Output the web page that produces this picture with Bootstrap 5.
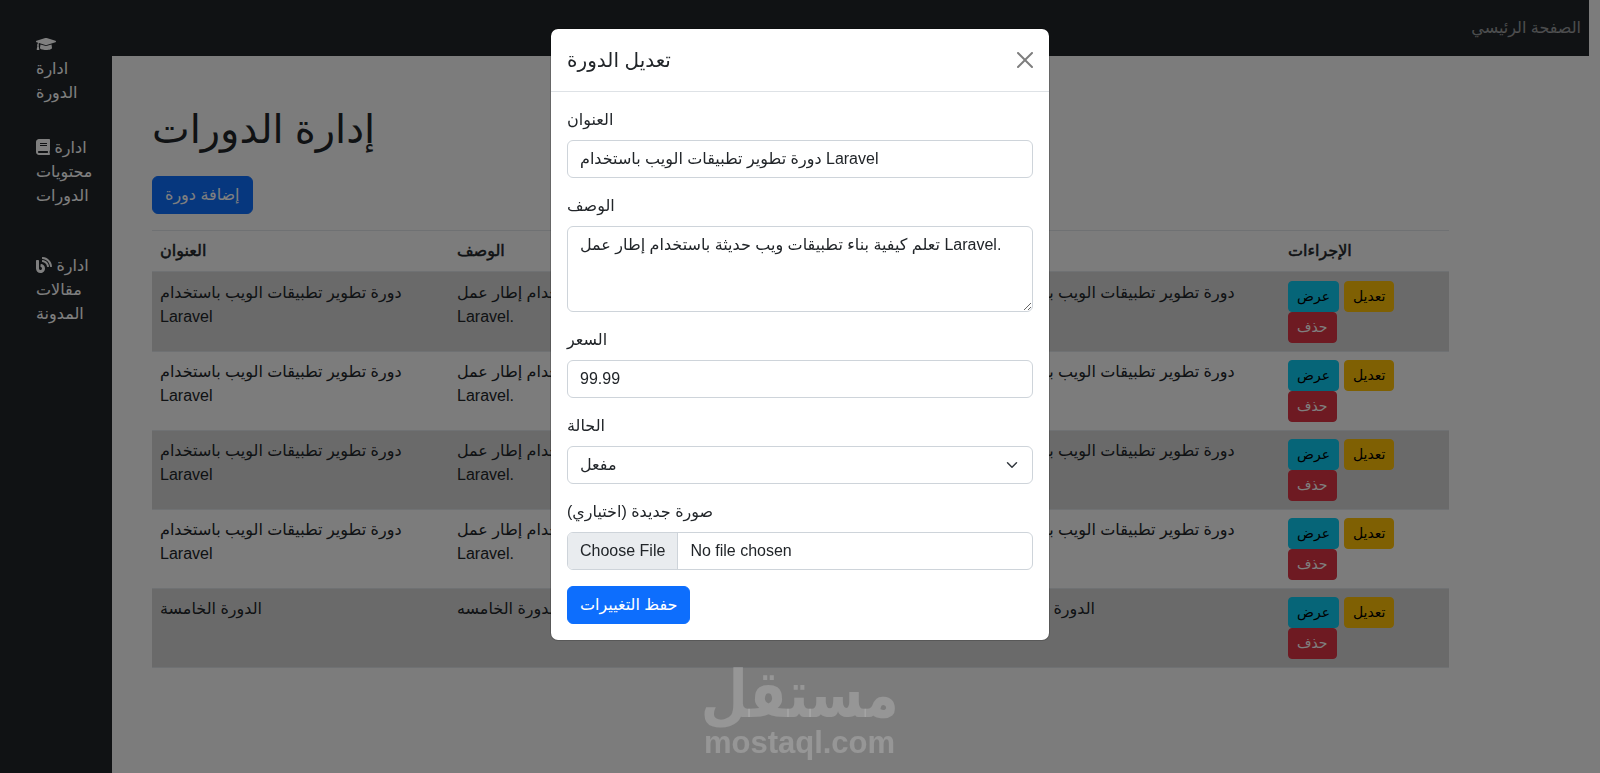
<!DOCTYPE html>
<html lang="ar">
<head>
    <meta charset="UTF-8">
    <title>إدارة الدورات</title>
    <link rel="stylesheet" href="https://cdn.jsdelivr.net/npm/bootstrap@5.3.2/dist/css/bootstrap.min.css">
    <style>
        body { font-family: "Liberation Sans", "DejaVu Sans", sans-serif; padding-right: 11px; overflow: hidden; background: #f8f8f8; }
        .side-bar { width: 112px; flex: none; padding: 33px 0 0 36px; }
        .side-bar a { display: block; width: 56px; color: #fff; text-decoration: none; }
        .side-bar a.first-link { margin-bottom: 31px; }
        .side-bar a.second-link { margin-bottom: 46px; }
        .side-bar svg { fill: currentColor; height: 16px; vertical-align: -2px; }
        .page-body { padding: 49px 140px 0 40px; }
        .page-body h1 { margin-bottom: 23px; }
        .courses-table { table-layout: fixed; width: 1297px; --bs-table-striped-bg: rgba(0, 0, 0, .14); --bs-table-bg: transparent; }
        .courses-table th { font-weight: 400; -webkit-text-stroke: .5px currentColor; }
        .courses-table th:nth-child(1) { width: 297px; }
        .courses-table th:nth-child(2) { width: 400px; }
        .courses-table th:nth-child(3) { width: 69px; }
        .courses-table th:nth-child(4) { width: 67px; }
        .courses-table th:nth-child(5) { width: 295px; }
        .courses-table th:nth-child(6) { width: 169px; }
        .courses-table tbody tr:first-child td { padding-top: 9px; }
        .courses-table .btn-info { margin-right: .5px; }
        .form-control, .form-select { border-color: #ced4da; }
        .form-control::file-selector-button { background-color: #e9ecef; }
        .water-mark { z-index: 1060; left: 703px; width: 193px; top: 661px; color: rgba(255, 255, 255, .2); pointer-events: none; }
        .water-mark .logo-ar { font: 700 66px/67px "DejaVu Sans", sans-serif; transform: scaleX(.82); white-space: nowrap; }
        .water-mark .logo-en { font: 700 31px/30px "Liberation Sans", sans-serif; white-space: nowrap; }
    </style>
</head>
<body class="modal-open">

<div class="d-flex min-vh-100">
    <div class="side-bar bg-dark">
        <a href="#" class="first-link">
            <svg viewBox="0 0 640 512"><path d="M622.34 153.2L343.4 67.5c-15.2-4.67-31.6-4.67-46.79 0L17.66 153.2c-23.54 7.23-23.54 38.36 0 45.59l48.63 14.94c-10.67 13.19-17.23 29.28-17.88 46.9C38.78 266.15 32 276.11 32 288c0 10.78 5.68 19.85 13.86 25.65L20.33 428.53C18.11 438.52 25.71 448 35.94 448h56.11c10.24 0 17.84-9.48 15.62-19.47L82.14 313.65C90.32 307.85 96 298.78 96 288c0-11.57-6.47-21.25-15.66-26.87.76-15.02 8.44-28.3 20.69-36.72L296.6 284.5c9.06 2.78 26.44 6.25 46.79 0l278.95-85.7c23.55-7.24 23.55-38.36 0-45.6zM352.79 315.09c-28.53 8.76-52.84 3.92-65.59 0l-145.02-44.55L128 384c0 35.35 85.96 64 192 64s192-28.65 192-64l-14.18-113.47-145.03 44.56z"/></svg>
            ادارة الدورة
        </a>
        <a href="#" class="second-link">
            <svg viewBox="0 0 448 512"><path d="M448 360V24c0-13.3-10.7-24-24-24H96C43 0 0 43 0 96v320c0 53 43 96 96 96h328c13.3 0 24-10.7 24-24v-16c0-7.5-3.5-14.3-8.9-18.7-4.2-15.4-4.2-59.3 0-74.7 5.4-4.3 8.9-11.1 8.9-18.6zM128 134c0-3.3 2.7-6 6-6h212c3.3 0 6 2.7 6 6v20c0 3.3-2.7 6-6 6H134c-3.3 0-6-2.7-6-6v-20zm0 64c0-3.3 2.7-6 6-6h212c3.3 0 6 2.7 6 6v20c0 3.3-2.7 6-6 6H134c-3.3 0-6-2.7-6-6v-20zm253.4 250H96c-17.7 0-32-14.3-32-32 0-17.6 14.4-32 32-32h285.4c-1.9 17.1-1.9 46.9 0 64z"/></svg>
            ادارة محتويات الدورات
        </a>
        <a href="#">
            <svg viewBox="0 0 512 512"><path d="M172.2 226.8c-14.6-2.9-28.2 8.9-28.2 23.8V301c0 10.2 7.1 18.4 16.7 22 18.2 6.8 31.3 24.4 31.3 45 0 26.5-21.5 48-48 48s-48-21.5-48-48V120c0-13.3-10.7-24-24-24H24c-13.3 0-24 10.7-24 24v248c0 89.5 82.1 160.2 175 140.7 54.4-11.4 98.3-55.4 109.7-109.7 17.4-82.9-37-157.2-112.5-172.2zM209 0c-9.2-.5-17 6.8-17 16v31.6c0 8.5 6.6 15.5 15 15.9 129.4 7 233.1 112 240.9 241.5.5 8.4 7.5 15 15.9 15h32.1c9.2 0 16.5-7.8 16-17C503.4 139.8 372.2 8.6 209 0zm.3 96c-9.3-.7-17.3 6.7-17.3 16.1v32.1c0 8.4 6.5 15.3 14.8 15.9 76.8 6.3 138 68.2 144.9 145.2.8 8.3 7.6 14.7 15.9 14.7h32.2c9.3 0 16.8-8 16.1-17.3-8.4-110.1-96.5-198.2-206.6-206.7z"/></svg>
            ادارة مقالات المدونة
        </a>
    </div>

    <div class="flex-grow-1">
        <nav class="navbar navbar-expand-lg navbar-dark bg-dark p-0">
            <div class="container-fluid px-0 justify-content-end">
                <ul class="navbar-nav flex-row">
                    <li class="nav-item py-2">
                        <a class="nav-link px-2" href="#">الصفحة الرئيسي</a>
                    </li>
                </ul>
            </div>
        </nav>

        <div class="page-body">
            <h1>إدارة الدورات</h1>
            <a href="#" class="btn btn-primary mb-3">إضافة دورة</a>

            <table class="table table-striped border-top courses-table">
                <thead>
                <tr>
                    <th>العنوان</th>
                    <th>الوصف</th>
                    <th>السعر</th>
                    <th>الحالة</th>
                    <th>القسم</th>
                    <th>الإجراءات</th>
                </tr>
                </thead>
                <tbody id="rows"></tbody>
            </table>
        </div>
    </div>
</div>

<div class="modal-backdrop show"></div>

<div class="modal d-block" tabindex="-1">
    <div class="modal-dialog">
        <div class="modal-content">
            <div class="modal-header">
                <h5 class="modal-title">تعديل الدورة</h5>
                <button type="button" class="btn-close" aria-label="Close"></button>
            </div>
            <div class="modal-body">
                <form>
                    <div class="mb-3">
                        <label for="title" class="form-label">العنوان</label>
                        <input type="text" id="title" class="form-control" value="دورة تطوير تطبيقات الويب باستخدام Laravel">
                    </div>
                    <div class="mb-3">
                        <label for="description" class="form-label">الوصف</label>
                        <textarea id="description" class="form-control" rows="3">تعلم كيفية بناء تطبيقات ويب حديثة باستخدام إطار عمل Laravel.</textarea>
                    </div>
                    <div class="mb-3">
                        <label for="price" class="form-label">السعر</label>
                        <input type="number" id="price" class="form-control" step="0.01" value="99.99">
                    </div>
                    <div class="mb-3">
                        <label for="status" class="form-label">الحالة</label>
                        <select id="status" class="form-select">
                            <option>مفعل</option>
                            <option>غير مفعل</option>
                        </select>
                    </div>
                    <div class="mb-3">
                        <label for="image" class="form-label">صورة جديدة (اختياري)</label>
                        <input type="file" id="image" class="form-control">
                    </div>
                    <button type="submit" class="btn btn-primary">حفظ التغييرات</button>
                </form>
            </div>
        </div>
    </div>
</div>

<div class="water-mark position-fixed d-flex flex-column align-items-center">
    <div class="logo-ar">مستقل</div>
    <div class="logo-en">mostaql.com</div>
</div>

<script src="https://cdn.jsdelivr.net/npm/bootstrap@5.3.2/dist/js/bootstrap.bundle.min.js"></script>
<script>
    const title = 'دورة تطوير تطبيقات الويب باستخدام Laravel'
    const desc = 'تعلم كيفية بناء تطبيقات ويب حديثة باستخدام إطار عمل Laravel.'
    const courses = [
        [title, desc, title], [title, desc, title], [title, desc, title], [title, desc, title],
        ['الدورة الخامسة', 'وصف الدورة الخامسه', 'الدورة الخامسة']
    ]
    document.querySelector('#rows').innerHTML = courses.map(c => `
        <tr>
            <td>${c[0]}</td>
            <td>${c[1]}</td>
            <td>99.99</td>
            <td>مفعل</td>
            <td>${c[2]}</td>
            <td>
                <a href="#" class="btn btn-info btn-sm">عرض</a>
                <a href="#" class="btn btn-warning btn-sm">تعديل</a>
                <a href="#" class="btn btn-danger btn-sm">حذف</a>
            </td>
        </tr>`).join('')
</script>

</body>
</html>
